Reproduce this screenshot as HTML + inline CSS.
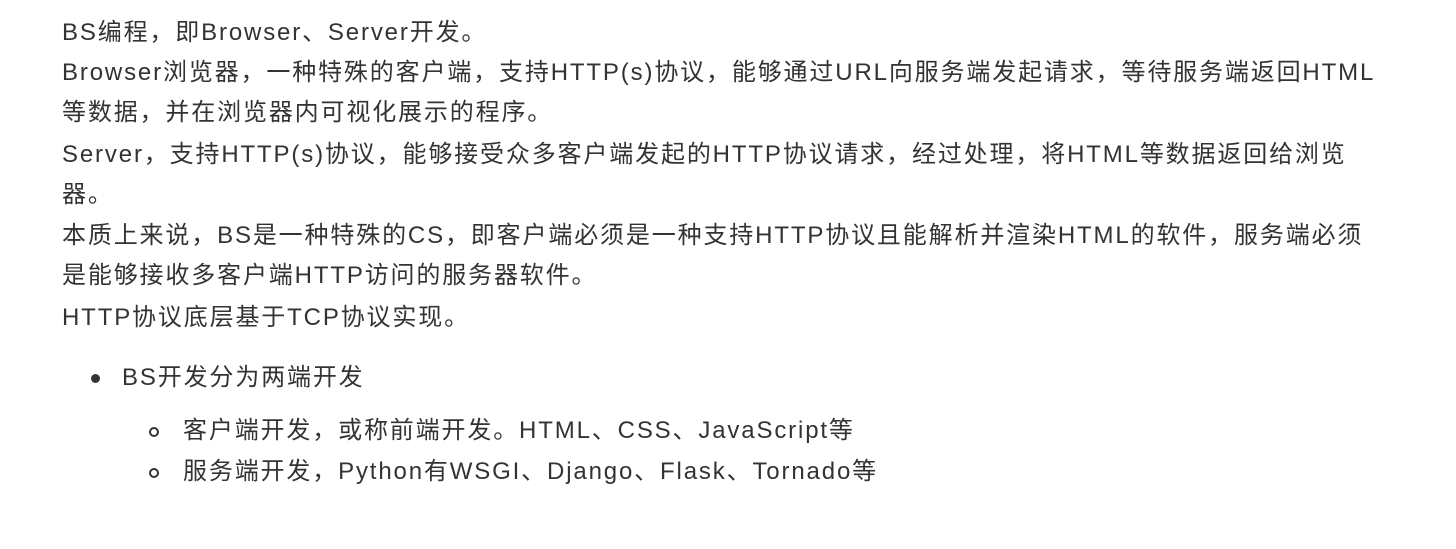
<!DOCTYPE html>
<html><head><meta charset="utf-8"><style>
body{margin:0;width:1456px;height:549px;background:#fff;overflow:hidden;position:relative;font-family:"Liberation Sans","Noto Sans CJK SC",sans-serif;color:#333;font-size:24px;letter-spacing:1.85px}
.l{position:absolute;left:62px;line-height:40px;white-space:nowrap}
.dot{position:absolute;width:9px;height:9px;border-radius:50%;background:#333}
.circ{position:absolute;width:10px;height:10px;border-radius:50%;border:2px solid #333;box-sizing:border-box}
</style></head><body>
<div class="l" style="top:13px">BS编程，即Browser、Server开发。</div>
<div class="l" style="top:53px">Browser浏览器，一种特殊的客户端，支持HTTP(s)协议，能够通过URL向服务端发起请求，等待服务端返回HTML</div>
<div class="l" style="top:93px">等数据，并在浏览器内可视化展示的程序。</div>
<div class="l" style="top:135px">Server，支持HTTP(s)协议，能够接受众多客户端发起的HTTP协议请求，经过处理，将HTML等数据返回给浏览</div>
<div class="l" style="top:175px">器。</div>
<div class="l" style="top:216px">本质上来说，BS是一种特殊的CS，即客户端必须是一种支持HTTP协议且能解析并渲染HTML的软件，服务端必须</div>
<div class="l" style="top:256px">是能够接收多客户端HTTP访问的服务器软件。</div>
<div class="l" style="top:298px">HTTP协议底层基于TCP协议实现。</div>
<div class="dot" style="left:91px;top:374px"></div>
<div class="l" style="top:358px;left:122px">BS开发分为两端开发</div>
<div class="circ" style="left:149px;top:427px"></div>
<div class="l" style="top:411px;left:183px">客户端开发，或称前端开发。HTML、CSS、JavaScript等</div>
<div class="circ" style="left:149px;top:468px"></div>
<div class="l" style="top:452px;left:183px">服务端开发，Python有WSGI、Django、Flask、Tornado等</div>
</body></html>
